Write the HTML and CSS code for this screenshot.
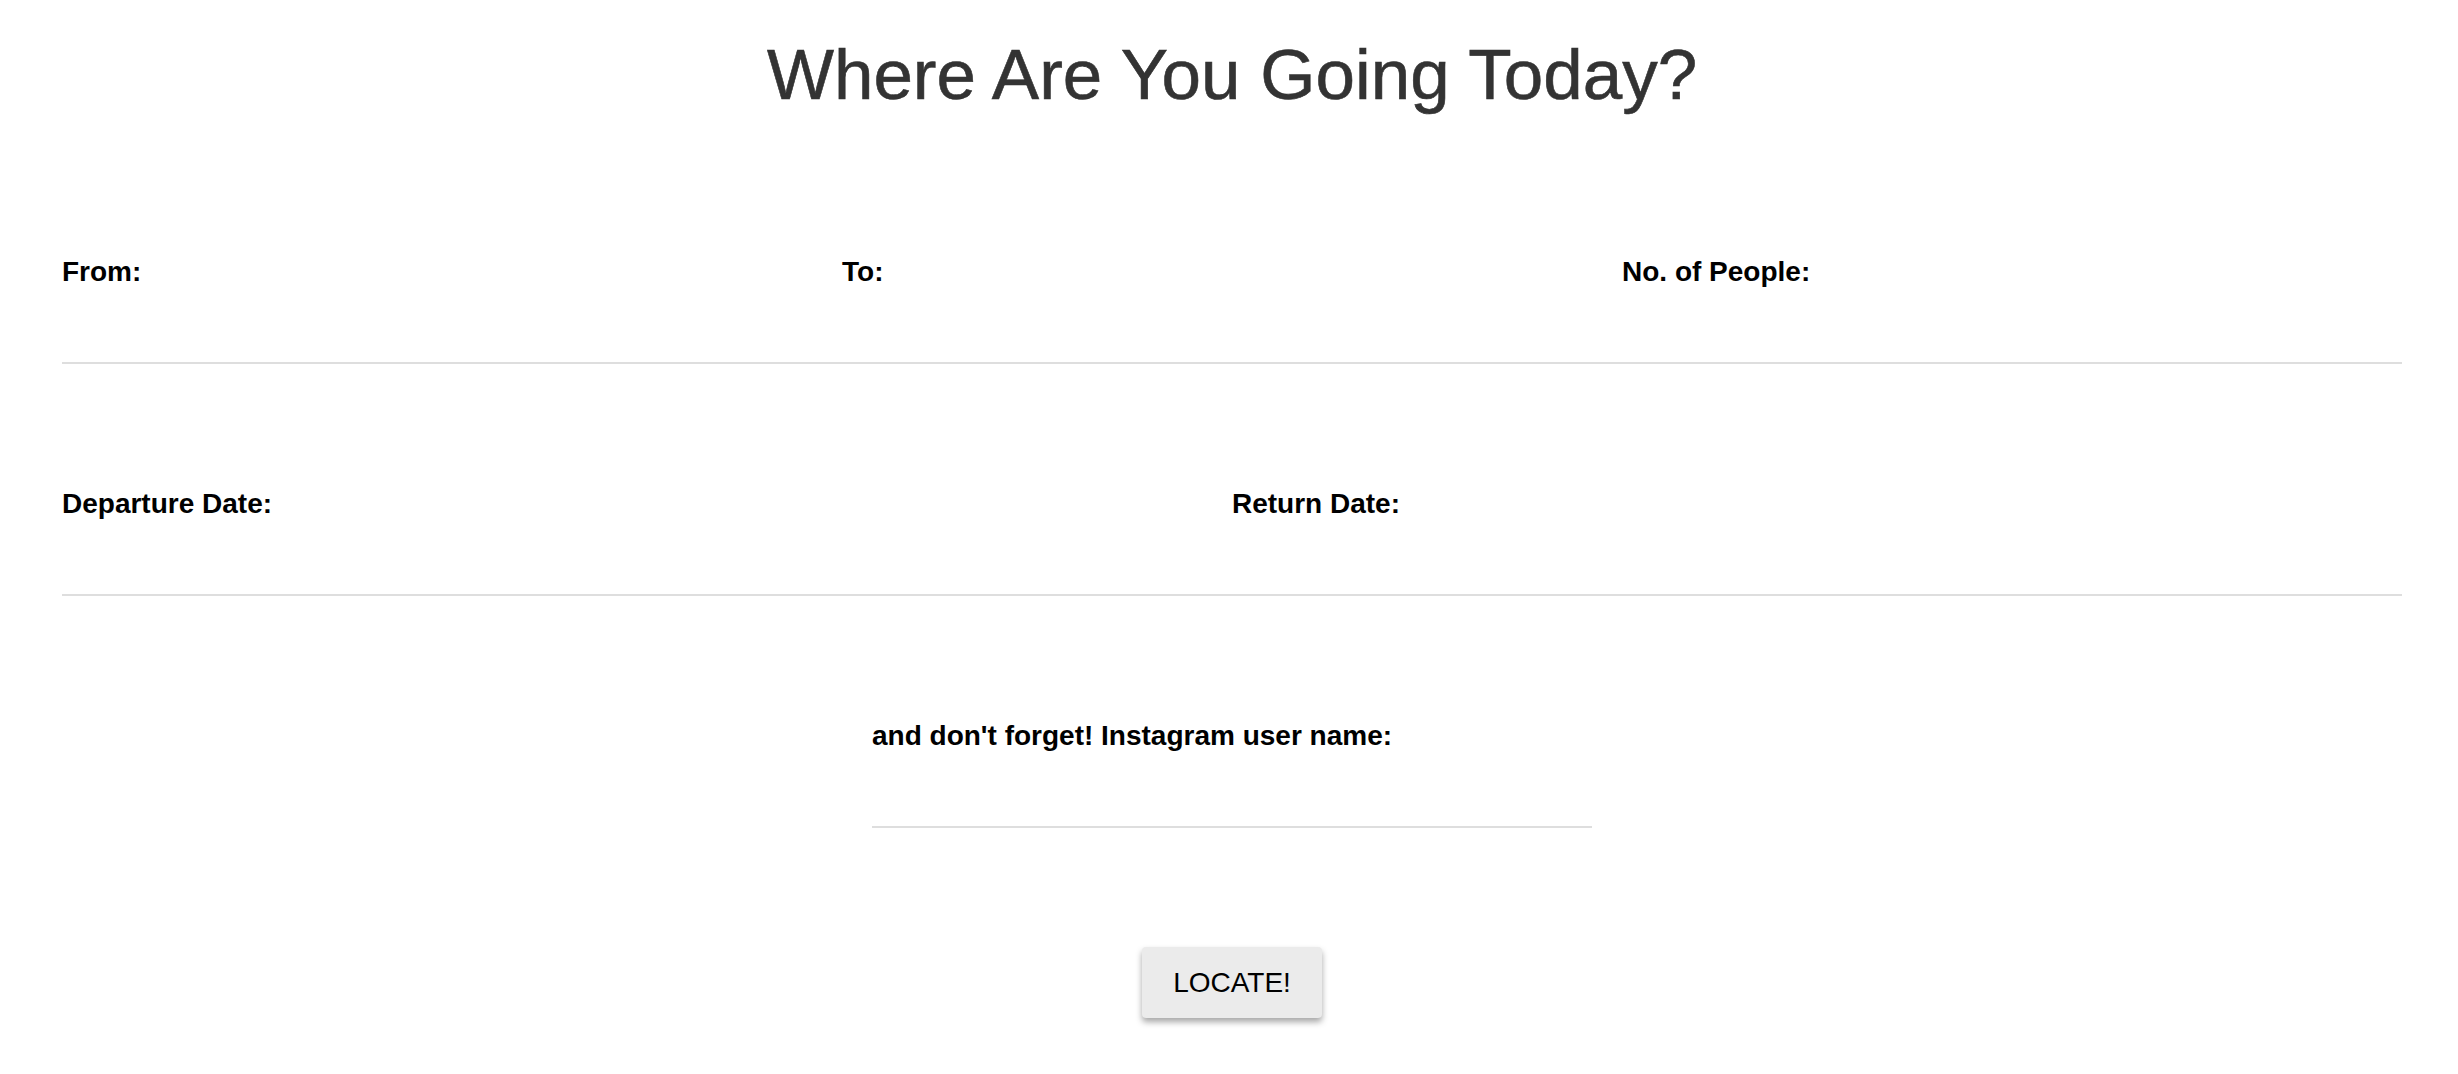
FILE: index.html
```html
<!DOCTYPE html>
<html lang="en">
<head>
<meta charset="utf-8">
<title>Where Are You Going Today?</title>
<link rel="stylesheet" href="styles.css">
</head>
<body>
<main class="page">
  <h1 class="title">Where Are You Going Today?</h1>
  <form class="trip-form">
    <div class="row row-3">
      <div class="field">
        <label class="field-label" for="from">From:</label>
        <input class="field-input" id="from" type="text">
      </div>
      <div class="field">
        <label class="field-label" for="to">To:</label>
        <input class="field-input" id="to" type="text">
      </div>
      <div class="field">
        <label class="field-label" for="people">No. of People:</label>
        <input class="field-input" id="people" type="text">
      </div>
    </div>
    <div class="row row-2">
      <div class="field">
        <label class="field-label" for="dep">Departure Date:</label>
        <input class="field-input" id="dep" type="text">
      </div>
      <div class="field">
        <label class="field-label" for="ret">Return Date:</label>
        <input class="field-input" id="ret" type="text">
      </div>
    </div>
    <div class="row row-1">
      <div class="field field-narrow">
        <label class="field-label" for="insta">and don't forget! Instagram user name:</label>
        <input class="field-input" id="insta" type="text">
      </div>
    </div>
    <div class="actions">
      <button class="locate-btn" type="button">LOCATE!</button>
    </div>
  </form>
</main>
</body>
</html>
```

FILE: styles.css
```css
html, body {
  margin: 0;
  padding: 0;
  background: #ffffff;
}

body {
  font-family: "Liberation Sans", Arial, Helvetica, sans-serif;
  color: #000;
}

.page {
  width: 2340px;
  margin-left: 62px;
  padding-bottom: 55px;
}

.title {
  margin: 35px 0 0;
  font-size: 71px;
  line-height: 80px;
  font-weight: 400;
  color: #333333;
  text-align: center;
  -webkit-text-stroke: 0.6px #333333;
}

.trip-form {
  display: flex;
  flex-direction: column;
  padding-top: 141px;
}

.row {
  display: grid;
  margin-bottom: 124px;
}

.row-3 {
  grid-template-columns: repeat(3, 1fr);
  border-bottom: 2px solid #dedede;
}

.row-2 {
  grid-template-columns: repeat(2, 1fr);
  border-bottom: 2px solid #dedede;
}

.row-1 {
  grid-template-columns: 720px;
  justify-content: center;
  margin-bottom: 119px;
}

.field {
  display: flex;
  flex-direction: column;
}

.field-narrow {
  border-bottom: 2px solid #dedede;
}

.field-label {
  font-size: 28px;
  line-height: 32px;
  font-weight: 700;
  color: #000;
}

.field-input {
  height: 74px;
  border: none;
  outline: none;
  padding: 0;
  margin: 0;
  background: transparent;
  font: inherit;
}

.actions {
  display: flex;
  justify-content: center;
}

.locate-btn {
  width: 180px;
  height: 71px;
  border: none;
  border-radius: 4px;
  background: #ebebeb;
  color: #000;
  font-family: "Liberation Sans", Arial, Helvetica, sans-serif;
  font-size: 28px;
  box-shadow: 0 4px 6px rgba(0, 0, 0, 0.35);
  padding: 0;
}
```
